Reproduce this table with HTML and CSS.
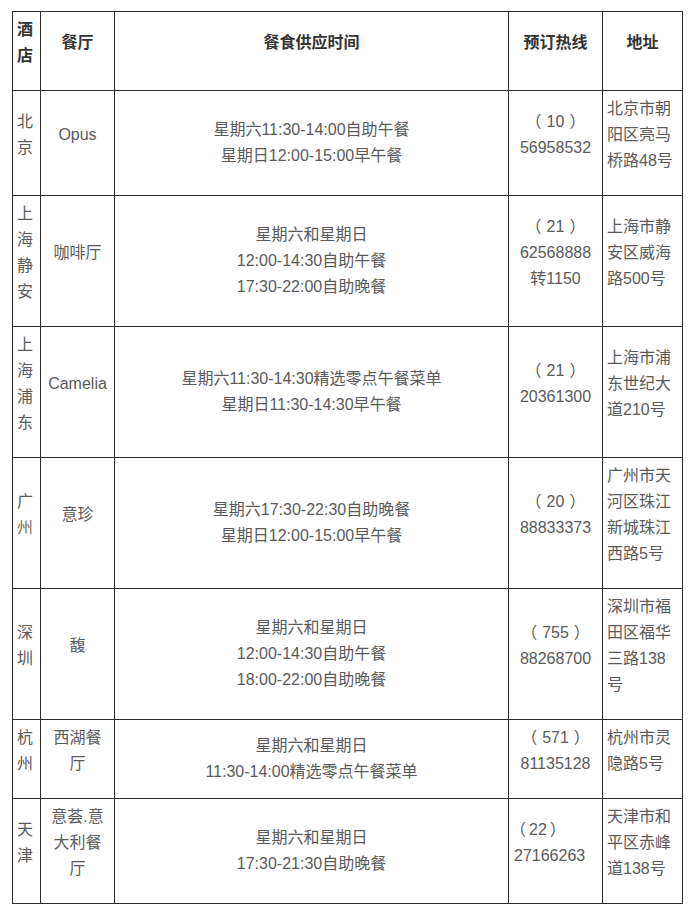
FILE: index.html
```html
<!DOCTYPE html>
<html lang="zh-CN">
<head>
<meta charset="utf-8">
<title>酒店餐厅</title>
<link rel="stylesheet" href="styles.css">
</head>
<body>
<table class="menu-table">
  <colgroup>
    <col class="c-hotel">
    <col class="c-rest">
    <col class="c-time">
    <col class="c-phone">
    <col class="c-addr">
  </colgroup>
  <thead>
    <tr>
      <th class="hotel">酒店</th>
      <th class="rest">餐厅</th>
      <th class="time">餐食供应时间</th>
      <th class="phone">预订热线</th>
      <th class="addr-h">地址</th>
    </tr>
  </thead>
  <tbody>
    <tr>
      <td class="hotel">北京</td>
      <td class="rest">Opus</td>
      <td class="time">星期六11:30-14:00自助午餐<br>星期日12:00-15:00早午餐</td>
      <td class="phone">（<span class="code">10</span>）<br>56958532</td>
      <td class="addr">北京市朝阳区亮马桥路48号</td>
    </tr>
    <tr>
      <td class="hotel">上海静安</td>
      <td class="rest">咖啡厅</td>
      <td class="time">星期六和星期日<br>12:00-14:30自助午餐<br>17:30-22:00自助晚餐</td>
      <td class="phone">（<span class="code">21</span>）<br>62568888<br>转1150</td>
      <td class="addr">上海市静安区威海路500号</td>
    </tr>
    <tr>
      <td class="hotel">上海浦东</td>
      <td class="rest">Camelia</td>
      <td class="time">星期六11:30-14:30精选零点午餐菜单<br>星期日11:30-14:30早午餐</td>
      <td class="phone">（<span class="code">21</span>）<br>20361300</td>
      <td class="addr">上海市浦东世纪大道210号</td>
    </tr>
    <tr>
      <td class="hotel">广<span class="tint">州</span></td>
      <td class="rest">意珍</td>
      <td class="time">星期六17:30-22:30自助晚餐<br>星期日12:00-15:00早午餐</td>
      <td class="phone">（<span class="code">20</span>）<br>88833373</td>
      <td class="addr">广州市天河区珠江新城珠江西路5号</td>
    </tr>
    <tr>
      <td class="hotel">深圳</td>
      <td class="rest">馥</td>
      <td class="time">星期六和星期日<br>12:00-14:30自助午餐<br>18:00-22:00自助晚餐</td>
      <td class="phone">（<span class="code">755</span>）<br>88268700</td>
      <td class="addr">深圳市福田区福华三路138号</td>
    </tr>
    <tr>
      <td class="hotel">杭州</td>
      <td class="rest">西湖餐<br>厅</td>
      <td class="time">星期六和星期日<br>11:30-14:00精选零点午餐菜单</td>
      <td class="phone">（<span class="code">571</span>）<br>81135128</td>
      <td class="addr">杭州市灵隐路5号</td>
    </tr>
    <tr>
      <td class="hotel">天津</td>
      <td class="rest">意荟.意<br>大利餐<br>厅</td>
      <td class="time">星期六和星期日<br>17:30-21:30自助晚餐</td>
      <td class="phone left"><span class="lp">（</span><span class="code tight">22</span>）<br>27166263</td>
      <td class="addr">天津市和平区赤峰道138号</td>
    </tr>
  </tbody>
</table>
</body>
</html>
```
FILE: styles.css
```css
html, body {
  margin: 0;
  padding: 0;
  background: #ffffff;
}
body {
  padding: 11px 0 0 12px;
  font-family: "Liberation Sans", "Noto Sans CJK SC", sans-serif;
  font-size: 16px;
  line-height: 26px;
  color: #5a5a5a;
}
.menu-table {
  border-collapse: collapse;
  table-layout: fixed;
  width: 670px;
}
.c-hotel { width: 28px; }
.c-rest { width: 74px; }
.c-time { width: 394px; }
.c-phone { width: 94px; }
.c-addr { width: 80px; }

.menu-table th,
.menu-table td {
  border: 1px solid #2b2b2b;
  padding: 5px 6px 21px 6px;
  vertical-align: middle;
  text-align: center;
  word-break: break-all;
}
.menu-table th {
  font-weight: bold;
  color: #333333;
}
.menu-table td.time {
  padding: 5px 6px;
}
.menu-table .hotel {
  padding-left: 4px;
  padding-right: 4px;
  text-align: left;
}
.menu-table td.addr {
  text-align: left;
  padding-left: 4px;
  padding-right: 5px;
}
.menu-table td.phone.left {
  text-align: left;
  padding-left: 5px;
}
.code {
  margin: 0 5px;
}
.code.tight {
  margin: 0 3px;
}
.lp {
  margin-left: -4px;
}
.tint {
  color: #7a7352;
}
```
